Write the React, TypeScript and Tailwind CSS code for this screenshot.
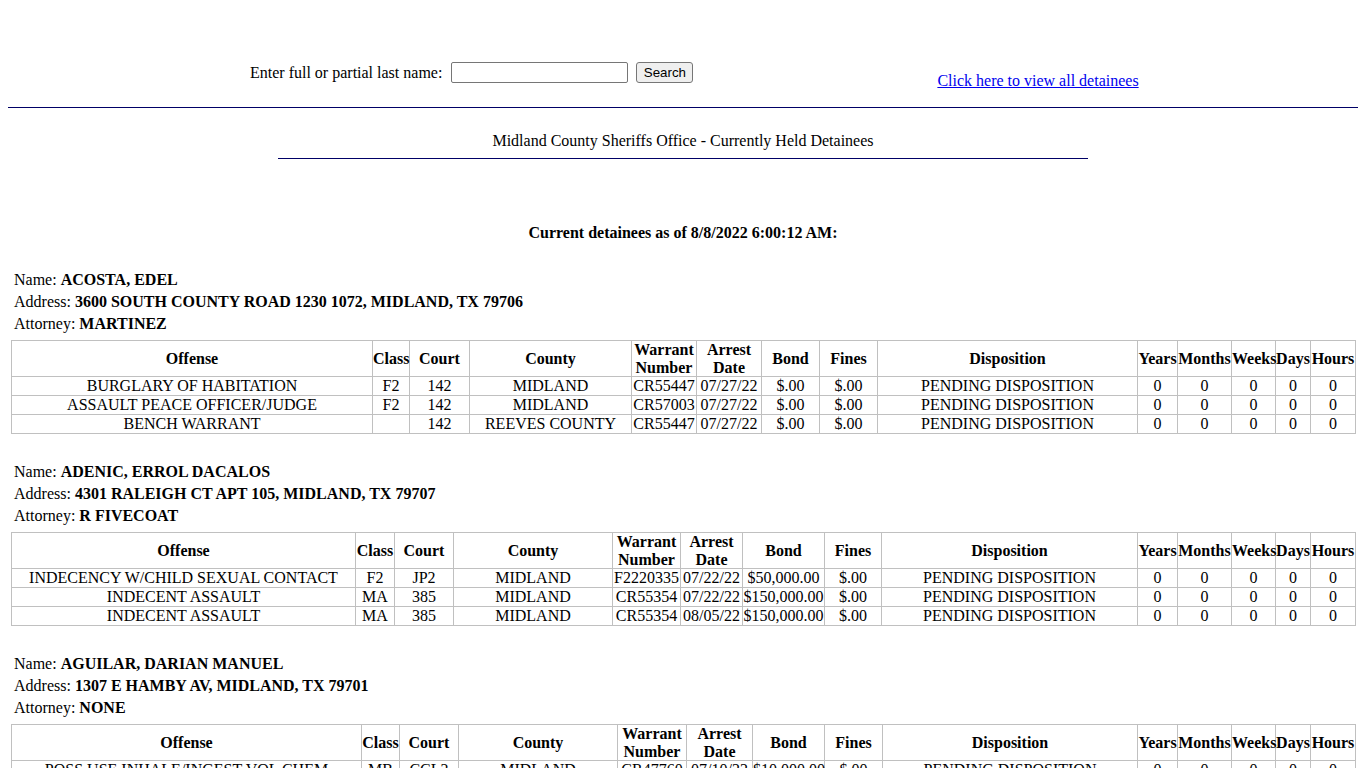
import React from "react";

type Row = [string, string, string, string, string, string, string, string, string];

interface Detainee {
  name: string;
  address: string;
  attorney: string;
  widths: number[];
  rows: Row[];
}

const tail = [40, 54, 44, 35, 45];

const detainees: Detainee[] = [
  {
    name: "ACOSTA, EDEL",
    address: "3600 SOUTH COUNTY ROAD 1230 1072, MIDLAND, TX 79706",
    attorney: "MARTINEZ",
    widths: [361, 37, 60, 162, 65, 65, 58, 58, 260, ...tail],
    rows: [
      ["BURGLARY OF HABITATION", "F2", "142", "MIDLAND", "CR55447", "07/27/22", "$.00", "$.00", "PENDING DISPOSITION"],
      ["ASSAULT PEACE OFFICER/JUDGE", "F2", "142", "MIDLAND", "CR57003", "07/27/22", "$.00", "$.00", "PENDING DISPOSITION"],
      ["BENCH WARRANT", "", "142", "REEVES COUNTY", "CR55447", "07/27/22", "$.00", "$.00", "PENDING DISPOSITION"],
    ],
  },
  {
    name: "ADENIC, ERROL DACALOS",
    address: "4301 RALEIGH CT APT 105, MIDLAND, TX 79707",
    attorney: "R FIVECOAT",
    widths: [344, 39, 59, 159, 68, 62, 82, 57, 256, ...tail],
    rows: [
      ["INDECENCY W/CHILD SEXUAL CONTACT", "F2", "JP2", "MIDLAND", "F2220335", "07/22/22", "$50,000.00", "$.00", "PENDING DISPOSITION"],
      ["INDECENT ASSAULT", "MA", "385", "MIDLAND", "CR55354", "07/22/22", "$150,000.00", "$.00", "PENDING DISPOSITION"],
      ["INDECENT ASSAULT", "MA", "385", "MIDLAND", "CR55354", "08/05/22", "$150,000.00", "$.00", "PENDING DISPOSITION"],
    ],
  },
  {
    name: "AGUILAR, DARIAN MANUEL",
    address: "1307 E HAMBY AV, MIDLAND, TX 79701",
    attorney: "NONE",
    widths: [350, 38, 59, 159, 69, 66, 72, 58, 255, ...tail],
    rows: [
      ["POSS USE INHALE/INGEST VOL CHEM", "MB", "CCL2", "MIDLAND", "CR47760", "07/10/22", "$10,000.00", "$.00", "PENDING DISPOSITION"],
      ["POSS MARIJ <2OZ", "MB", "CCL2", "MIDLAND", "CR47761", "07/10/22", "$2,500.00", "$.00", "PENDING DISPOSITION"],
    ],
  },
];

const Th = ({ children }: { children: React.ReactNode }) => (
  <th className="border border-[#c0c0c0] p-0 text-center align-middle font-bold leading-[17.5px] whitespace-nowrap">
    {children}
  </th>
);

const Td = ({ children }: { children: React.ReactNode }) => (
  <td className="border border-[#c0c0c0] p-0 text-center align-middle leading-[18px] whitespace-nowrap">
    {children}
  </td>
);

function DetaineeBlock({ d }: { d: Detainee }) {
  return (
    <div className="mb-[27px]">
      <div className="pl-[6px] leading-[22px]">
        <div>
          Name: <b>{d.name}</b>
        </div>
        <div>
          Address: <b>{d.address}</b>
        </div>
        <div>
          Attorney: <b>{d.attorney}</b>
        </div>
      </div>
      <table className="mt-[5px] ml-[3px] w-[1344px] table-fixed border-collapse">
        <colgroup>
          {d.widths.map((w, i) => (
            <col key={i} style={{ width: w }} />
          ))}
        </colgroup>
        <thead>
          <tr>
            <Th>Offense</Th>
            <Th>Class</Th>
            <Th>Court</Th>
            <Th>County</Th>
            <Th>
              Warrant
              <br />
              Number
            </Th>
            <Th>
              Arrest
              <br />
              Date
            </Th>
            <Th>Bond</Th>
            <Th>Fines</Th>
            <Th>Disposition</Th>
            <Th>Years</Th>
            <Th>Months</Th>
            <Th>Weeks</Th>
            <Th>Days</Th>
            <Th>Hours</Th>
          </tr>
        </thead>
        <tbody>
          {d.rows.map((r, i) => (
            <tr key={i}>
              {r.map((c, j) => (
                <Td key={j}>{c}</Td>
              ))}
              <Td>0</Td>
              <Td>0</Td>
              <Td>0</Td>
              <Td>0</Td>
              <Td>0</Td>
            </tr>
          ))}
        </tbody>
      </table>
    </div>
  );
}

export default function App() {
  return (
    <div className="min-h-screen bg-white font-['Liberation_Serif','Times_New_Roman',serif] text-[16px] text-black">
      <div className="px-[8px]">
        <div className="flex items-start pt-[62px]">
          <div className="ml-[242px] flex items-center">
            <span className="leading-[18px]">Enter full or partial last name:</span>
            <input
              type="text"
              className="ml-[9px] h-[21px] w-[177px] rounded-[2px] border border-[#767676] bg-white px-[2px] text-[13px] outline-none"
            />
            <button className="ml-[8px] h-[21px] w-[57px] rounded-[3px] border border-[#767676] bg-[#efefef] font-['Liberation_Sans',Arial,sans-serif] text-[13.33px] leading-[15px] text-black">
              Search
            </button>
          </div>
          <a
            href="#"
            className="ml-[244px] mt-[10px] leading-[18px] text-[#0000ee] underline"
          >
            Click here to view all detainees
          </a>
        </div>
        <div className="mt-[17px] border-t border-[#000066]" />
        <div className="mt-[24px] text-center leading-[18px]">
          Midland County Sheriffs Office - Currently Held Detainees
        </div>
        <div className="mx-auto mt-[8px] w-[60%] border-t border-[#000066]" />
        <div className="mt-[65px] text-center font-bold leading-[18px]">
          Current detainees as of 8/8/2022 6:00:12 AM:
        </div>
        <div className="mt-[27px]">
          {detainees.map((d, i) => (
            <DetaineeBlock key={i} d={d} />
          ))}
        </div>
      </div>
    </div>
  );
}
